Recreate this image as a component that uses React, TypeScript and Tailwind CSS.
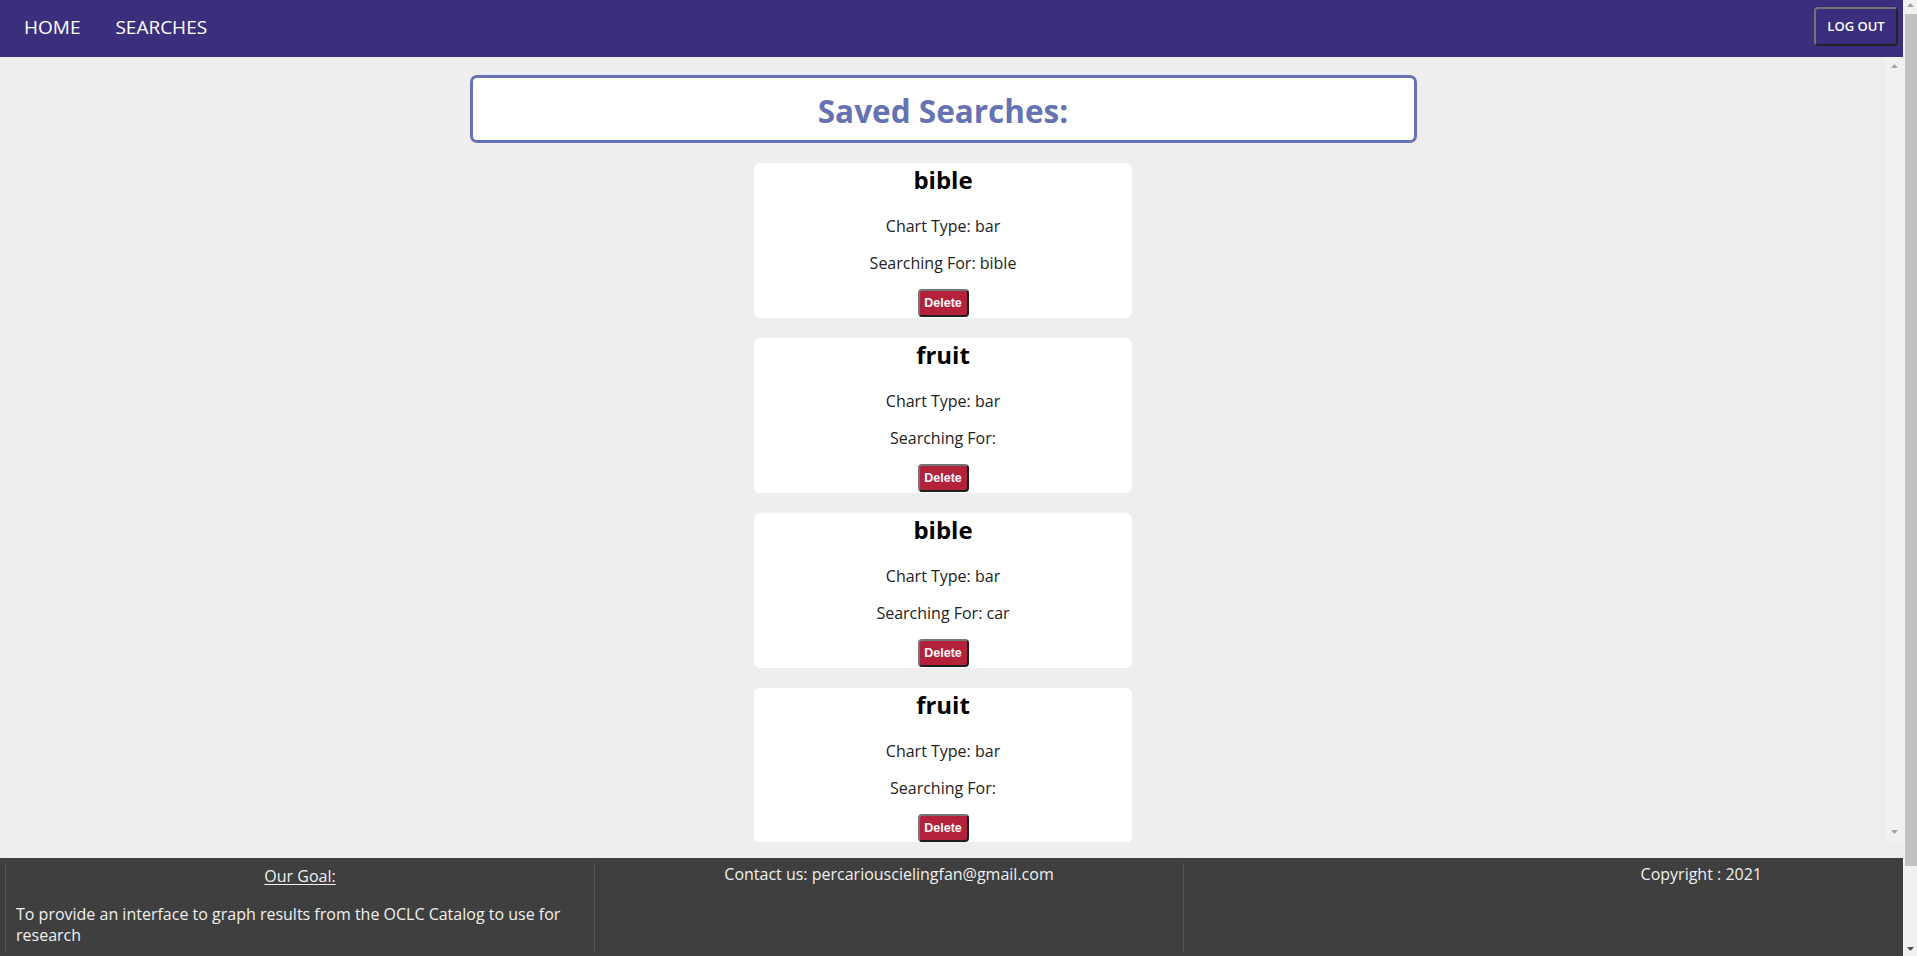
import React from "react";

const searches = [
  { title: "bible", chart: "bar", term: "bible" },
  { title: "fruit", chart: "bar", term: "" },
  { title: "bible", chart: "bar", term: "car" },
  { title: "fruit", chart: "bar", term: "" },
];

function ArrowUp({ color }: { color: string }) {
  return (
    <svg width="7" height="4" viewBox="0 0 7 4" className="block">
      <polygon points="3.5,0 7,4 0,4" fill={color} />
    </svg>
  );
}

function ArrowDown({ color }: { color: string }) {
  return (
    <svg width="7" height="4" viewBox="0 0 7 4" className="block">
      <polygon points="0,0 7,0 3.5,4" fill={color} />
    </svg>
  );
}

function SearchCard({ title, chart, term }: { title: string; chart: string; term: string }) {
  return (
    <div className="mt-[20px] flex h-[155px] w-[378px] shrink-0 flex-col items-center rounded-[6px] bg-white pt-[3px]">
      <h2 className="text-[24px] font-bold leading-[28px] text-black">{title}</h2>
      <p className="mt-[22px] text-[16px] font-normal leading-[21px] text-[#222]">Chart Type: {chart}</p>
      <p className="mt-[16px] text-[16px] font-normal leading-[21px] text-[#222]">Searching For: {term}</p>
      <button className="mt-[15px] flex h-[28px] w-[51px] items-center justify-center rounded-[4px] border-2 border-t-[#767676] border-l-[#767676] border-r-[#1f1f1f] border-b-[#1f1f1f] bg-[#b3213a] font-['Liberation_Sans',Arial,sans-serif] text-[12.5px] font-bold text-white">
        Delete
      </button>
    </div>
  );
}

export default function App() {
  return (
    <div className="flex h-[956px] w-full overflow-hidden bg-[#eeeeee] font-['Open_Sans',sans-serif]">
      <div className="flex w-[1903px] shrink-0 flex-col">
        <nav className="flex h-[57px] shrink-0 items-start justify-between bg-[#3b2f7d]">
          <div className="flex gap-[35px] pl-[24px] pt-[14px] text-[19px] font-normal leading-[26px] text-white">
            <span>HOME</span>
            <span>SEARCHES</span>
          </div>
          <button className="mr-[5px] mt-[7px] flex h-[39px] w-[84px] items-center justify-center rounded-[4px] border-2 border-t-[#737373] border-l-[#737373] border-r-[#222] border-b-[#222] bg-[#3b2f7d] text-[13px] font-semibold text-white">
            LOG OUT
          </button>
        </nav>

        <div className="flex h-[785px] shrink-0">
          <main className="flex w-[1886px] flex-col items-center overflow-hidden pt-[18px]">
            <div className="flex h-[68px] w-[947px] shrink-0 items-center justify-center rounded-[7px] border-[3px] border-[#6573b4] bg-white pt-[3px]">
              <h1 className="text-[31.5px] font-bold leading-[40px] text-[#6573b4]">Saved Searches:</h1>
            </div>
            {searches.map((s, i) => (
              <SearchCard key={i} {...s} />
            ))}
          </main>
          <div className="flex w-[17px] flex-col items-center justify-between bg-[#f1f1f1] pb-[8px] pt-[7px]">
            <ArrowUp color="#a3a3a3" />
            <ArrowDown color="#a3a3a3" />
          </div>
        </div>

        <div className="h-[16px] shrink-0" />

        <footer className="flex flex-1 bg-[#3f3f3f] pl-[5px] pt-[5px] text-[16px] font-normal leading-[21px] text-[#f0f0f0]">
          <div className="h-[90px] w-[589px] border-l border-[#575757] px-[10px] pt-[3px]">
            <p className="text-center underline underline-offset-2">Our Goal:</p>
            <p className="mt-[17px]">
              To provide an interface to graph results from the OCLC Catalog to use for
              <br />
              research
            </p>
          </div>
          <div className="h-[90px] w-[589px] border-l border-[#575757] px-[10px] pt-[1px] text-center">
            <p>Contact us: percariouscielingfan@gmail.com</p>
          </div>
          <div className="h-[90px] w-[589px] border-l border-[#575757] px-[10px] pt-[1px] text-right">
            <p>Copyright : 2021</p>
          </div>
        </footer>
      </div>

      <div className="flex w-[14px] shrink-0 flex-col bg-[#f1f1f1] pb-[5px] pt-[3px]">
        <div className="flex justify-center pl-[1px]">
          <ArrowUp color="#a3a3a3" />
        </div>
        <div className="ml-[2px] mt-[7px] h-[852px] w-[12px] bg-[#c1c1c1]" />
        <div className="flex-1" />
        <div className="flex justify-center pl-[1px]">
          <ArrowDown color="#505050" />
        </div>
      </div>
    </div>
  );
}
